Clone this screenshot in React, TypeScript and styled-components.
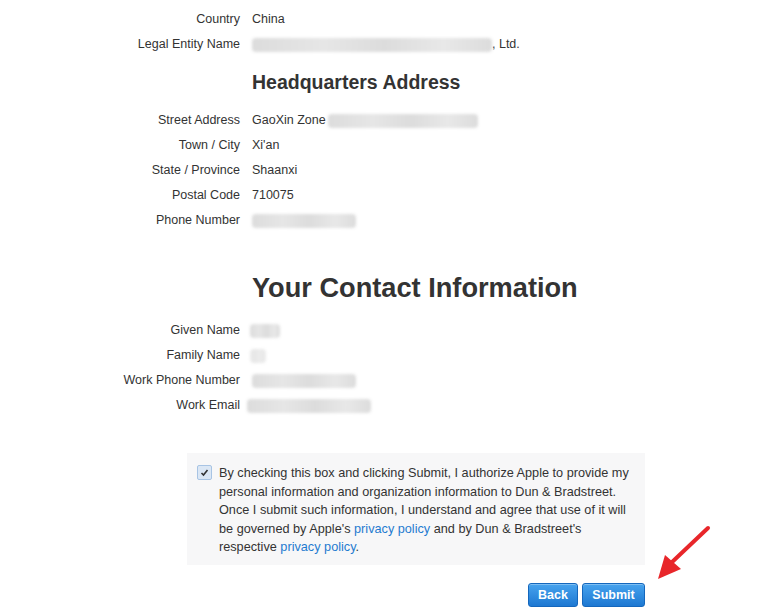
import React from "react";
import styled, { createGlobalStyle } from "styled-components";

const Global = createGlobalStyle`
  html, body { margin: 0; padding: 0; background: #ffffff; }
  body { font-family: "Liberation Sans", Arial, sans-serif; color: #333333; }
`;

const Page = styled.div`
  position: relative;
  width: 784px;
  height: 608px;
  overflow: hidden;
  padding-top: 7px;
  box-sizing: border-box;
`;

const Grid = styled.div`
  display: grid;
  grid-template-columns: 240px 1fr;
  column-gap: 12px;
`;

const Label = styled.div`
  text-align: right;
  font-size: 12.5px;
  line-height: 25px;
  height: 25px;
  color: #333;
  white-space: nowrap;
`;

const Value = styled.div`
  display: flex;
  align-items: center;
  font-size: 12.5px;
  line-height: 25px;
  height: 25px;
  color: #333;
  white-space: nowrap;
`;

const Heading = styled.h2<{ $big?: boolean }>`
  grid-column: 2;
  margin: 0;
  font-weight: 700;
  color: #333;
  font-size: ${(p) => (p.$big ? "27.2px" : "19.5px")};
  line-height: ${(p) => (p.$big ? "34px" : "51px")};
  padding-top: ${(p) => (p.$big ? "38px" : "0")};
  padding-bottom: ${(p) => (p.$big ? "13px" : "0")};
  white-space: nowrap;
`;

const Blur = styled.span<{ $w: number; $ml?: number; $tone?: string }>`
  display: inline-block;
  width: ${(p) => p.$w}px;
  height: 14px;
  margin-left: ${(p) => p.$ml ?? 0}px;
  border-radius: 4px;
  background: linear-gradient(
    90deg,
    ${(p) => p.$tone ?? "#dcdcdc"} 0%,
    #e6e6e6 30%,
    ${(p) => p.$tone ?? "#dcdcdc"} 55%,
    #e8e8e8 80%,
    ${(p) => p.$tone ?? "#dcdcdc"} 100%
  );
  filter: blur(1.5px);
`;

const Consent = styled.div`
  margin: 35px 0 0 187px;
  width: 458px;
  height: 112px;
  box-sizing: border-box;
  background: #f7f7f8;
  display: flex;
  gap: 7px;
  padding: 11px 0 0 10px;
`;

const Check = styled.div`
  flex: none;
  width: 13px;
  height: 13px;
  margin-top: 1px;
  border: 1px solid #a8c4e4;
  border-radius: 2px;
  background: #dbe7f5;
  display: flex;
  align-items: center;
  justify-content: center;
`;

const ConsentText = styled.p`
  margin: 0;
  font-size: 12.7px;
  line-height: 18.6px;
  color: #333;
`;

const Line = styled.span`
  display: block;
  white-space: nowrap;
`;

const Link = styled.a`
  color: #1f7bd0;
  text-decoration: none;
`;

const Actions = styled.div`
  display: flex;
  justify-content: flex-end;
  gap: 4px;
  width: 645px;
  margin-top: 18px;
`;

const Button = styled.button<{ $w: number }>`
  width: ${(p) => p.$w}px;
  height: 24px;
  padding: 0;
  border: 1px solid #1467bd;
  border-radius: 3px;
  background: linear-gradient(#47a3ee, #1d78d2);
  color: #fff;
  font-family: "Liberation Sans", Arial, sans-serif;
  font-weight: 700;
  font-size: 12.5px;
  box-shadow: inset 0 1px 0 rgba(255,255,255,0.3);
`;

const Arrow = styled.svg`
  position: absolute;
  left: 650px;
  top: 522px;
`;

const rows1 = [
  ["Country", <>China</>],
  ["Legal Entity Name", <><Blur $w={240} />, Ltd.</>],
];
const rows2 = [
  ["Street Address", <>GaoXin Zone <Blur $w={150} $ml={2} /></>],
  ["Town / City", <>Xi'an</>],
  ["State / Province", <>Shaanxi</>],
  ["Postal Code", <>710075</>],
  ["Phone Number", <><Blur $w={104} /></>],
];
const rows3 = [
  ["Given Name", <><Blur $w={30} $ml={-2} /></>],
  ["Family Name", <><Blur $w={16} $ml={-2} $tone="#ececec" /></>],
  ["Work Phone Number", <><Blur $w={104} /></>],
  ["Work Email", <><Blur $w={124} $ml={-5} /></>],
];

function Rows({ rows }: { rows: any[] }) {
  return (
    <>
      {rows.map(([l, v]) => (
        <React.Fragment key={l}>
          <Label>{l}</Label>
          <Value>{v}</Value>
        </React.Fragment>
      ))}
    </>
  );
}

export default function App() {
  return (
    <Page>
      <Global />
      <Grid>
        <Rows rows={rows1} />
        <Heading>Headquarters Address</Heading>
        <Rows rows={rows2} />
        <Heading $big>Your Contact Information</Heading>
        <Rows rows={rows3} />
      </Grid>
      <Consent>
        <Check>
          <svg width="9" height="9" viewBox="0 0 9 9">
            <path d="M1.5 5 L3.5 7 L7.5 2" stroke="#333" strokeWidth="1.6" fill="none" />
          </svg>
        </Check>
        <ConsentText>
          <Line>By checking this box and clicking Submit, I authorize Apple to provide my</Line>
          <Line>personal information and organization information to Dun &amp; Bradstreet.</Line>
          <Line>Once I submit such information, I understand and agree that use of it will</Line>
          <Line>be governed by Apple's <Link>privacy policy</Link> and by Dun &amp; Bradstreet's</Line>
          <Line>respective <Link>privacy policy</Link>.</Line>
        </ConsentText>
      </Consent>
      <Actions>
        <Button $w={50}>Back</Button>
        <Button $w={63}>Submit</Button>
      </Actions>
      <Arrow width="64" height="62" viewBox="0 0 64 62">
        <path d="M58 6 L20 42" stroke="#e8262a" strokeWidth="4" strokeLinecap="round" />
        <path d="M8 57 L15 33 L31 47 Z" fill="#e8262a" />
      </Arrow>
    </Page>
  );
}
